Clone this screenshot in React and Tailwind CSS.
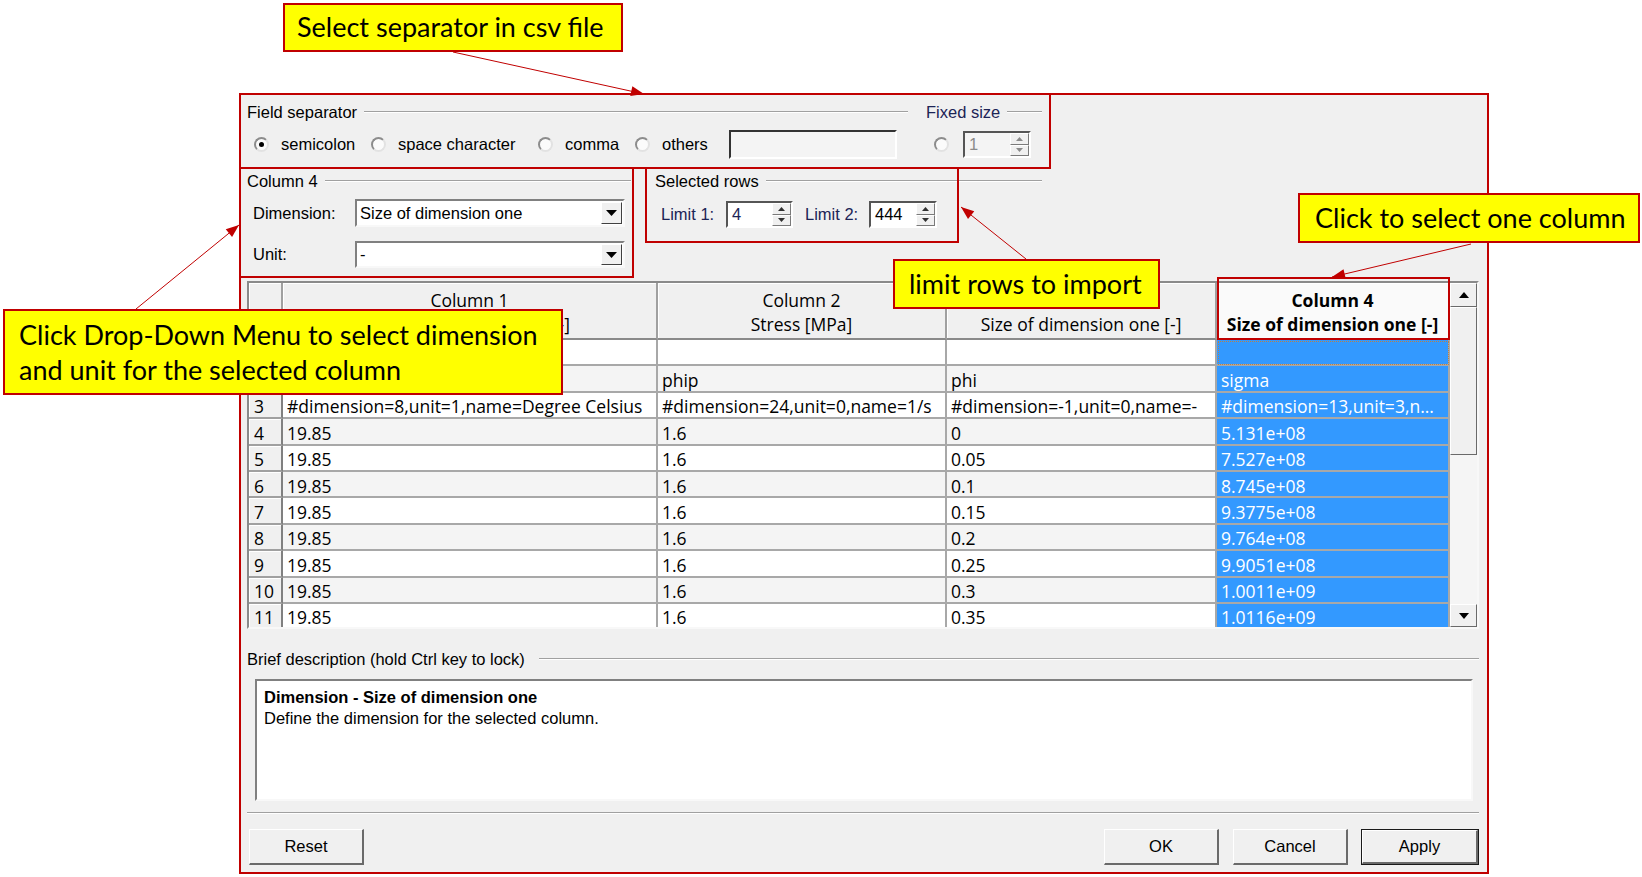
import React from 'react';

const cols = [
  { w: 'w-[375px]', h1: 'Column 1', h2: 'Size of dimension one [-]' },
  { w: 'w-[289px]', h1: 'Column 2', h2: 'Stress [MPa]' },
  { w: 'w-[270px]', h1: 'Column 3', h2: 'Size of dimension one [-]' },
  { w: 'w-[233px]', h1: 'Column 4', h2: 'Size of dimension one [-]', sel: true },
];

const rows = [
  ['1', '', '', '', ''],
  ['2', 'T', 'phip', 'phi', 'sigma'],
  ['3', '#dimension=8,unit=1,name=Degree Celsius', '#dimension=24,unit=0,name=1/s', '#dimension=-1,unit=0,name=-', '#dimension=13,unit=3,n...'],
  ['4', '19.85', '1.6', '0', '5.131e+08'],
  ['5', '19.85', '1.6', '0.05', '7.527e+08'],
  ['6', '19.85', '1.6', '0.1', '8.745e+08'],
  ['7', '19.85', '1.6', '0.15', '9.3775e+08'],
  ['8', '19.85', '1.6', '0.2', '9.764e+08'],
  ['9', '19.85', '1.6', '0.25', '9.9051e+08'],
  ['10', '19.85', '1.6', '0.3', '1.0011e+09'],
  ['11', '19.85', '1.6', '0.35', '1.0116e+09'],
];

// annotation arrows: [x1, y1, x2, y2], head at the second point
const arrows = [
  [453, 52, 644, 94],
  [1026, 259, 961, 207],
  [1471, 244, 1332, 277],
  [136, 309, 239, 225],
];

function arrowHead([x1, y1, x2, y2]) {
  const dx = x2 - x1;
  const dy = y2 - y1;
  const len = Math.hypot(dx, dy);
  const ux = dx / len;
  const uy = dy / len;
  const bx = x2 - ux * 13;
  const by = y2 - uy * 13;
  return `${x2},${y2} ${bx - uy * 5},${by + ux * 5} ${bx + uy * 5},${by - ux * 5}`;
}

function Etched({ className = '' }) {
  return <div className={`h-[2px] border-t border-t-[#a0a0a0] border-b border-b-white ${className}`} />;
}

function GroupTitle({ label, className = '', lineGap = 'ml-[7px]' }) {
  return (
    <div className={`flex items-center h-[20px] ${className}`}>
      <span className="whitespace-nowrap">{label}</span>
      <Etched className={`flex-1 ${lineGap}`} />
    </div>
  );
}

function Radio({ checked }) {
  return (
    <span className="flex items-center justify-center w-[15px] h-[15px] shrink-0 rounded-full bg-[#fbfbfb] border-2 border-t-[#8c8c8c] border-l-[#8c8c8c] border-r-[#e2e2e2] border-b-[#e2e2e2]">
      {checked && <span className="w-[5px] h-[5px] rounded-full bg-black" />}
    </span>
  );
}

function RadioItem({ label, checked, className = '' }) {
  return (
    <div className={`flex items-center shrink-0 ${className}`}>
      <Radio checked={checked} />
      {label && <span className="ml-[12px] whitespace-nowrap">{label}</span>}
    </div>
  );
}

function SpinArrows({ dim }) {
  const fill = dim ? '#8a8a8a' : '#303030';
  return (
    <div className="flex flex-col w-[19px] h-full shrink-0">
      <div className="flex-1 flex items-center justify-center bg-[#f0f0f0] border border-t-white border-l-white border-r-[#7a7a7a] border-b-[#7a7a7a]">
        <svg width="7" height="4"><path d="M0 4 L3.5 0 L7 4 Z" fill={fill} /></svg>
      </div>
      <div className="flex-1 flex items-center justify-center bg-[#f0f0f0] border border-t-white border-l-white border-r-[#7a7a7a] border-b-[#7a7a7a]">
        <svg width="7" height="4"><path d="M0 0 L7 0 L3.5 4 Z" fill={fill} /></svg>
      </div>
    </div>
  );
}

function Spin({ value, className = '', textClass = '', dim }) {
  return (
    <div className={`flex h-[27px] shrink-0 border-2 border-t-[#555] border-l-[#555] border-r-white border-b-white ${dim ? 'bg-[#f4f4f4]' : 'bg-white'} ${className}`}>
      <span className={`flex-1 pl-[4px] self-center ${textClass}`}>{value}</span>
      <SpinArrows dim={dim} />
    </div>
  );
}

function Combo({ value }) {
  return (
    <div className="flex w-[270px] h-full bg-white border-2 border-t-[#808080] border-l-[#808080] border-r-[#f8f8f8] border-b-[#f8f8f8]">
      <span className="flex-1 pl-[3px] self-center whitespace-nowrap">{value}</span>
      <span className="w-[21px] m-px flex items-center justify-center bg-[#f0f0f0] border border-t-white border-l-white border-r-[#404040] border-b-[#404040]">
        <svg width="11" height="6"><path d="M0 0 H11 L5.5 6 Z" fill="#000" /></svg>
      </span>
    </div>
  );
}

function Btn({ label, className = '', isDefault }) {
  return (
    <div className={`h-[36px] bg-[#f0f0f0] ${isDefault ? 'border border-[#1a1a1a]' : ''} ${className}`}>
      <div className="flex items-center justify-center w-full h-full border-t border-l border-t-white border-l-white border-r-2 border-b-2 border-r-[#6a6a6a] border-b-[#6a6a6a]">
        {label}
      </div>
    </div>
  );
}

function ScrollBtn({ up, className = '' }) {
  return (
    <div className={`flex items-center justify-center bg-[#f0f0f0] border border-t-white border-l-white border-r-[#6a6a6a] border-b-[#6a6a6a] ${className}`}>
      <svg width="10" height="6">
        <path d={up ? 'M0 6 L5 0 L10 6 Z' : 'M0 0 L10 0 L5 6 Z'} fill="#000" />
      </svg>
    </div>
  );
}

function DataTable() {
  return (
    <div className="mt-[4px] w-[1232px] h-[348px] flex border-2 border-t-[#8a8a8a] border-l-[#8a8a8a] border-r-[#f8f8f8] border-b-[#f8f8f8] bg-white font-['Open_Sans',sans-serif] text-[17.5px] text-black">
      <div className="w-[1201px] flex flex-col">
        <div className="flex h-[57px] shrink-0">
          <div className="w-[34px] bg-[#f0f0f0] border-r-2 border-b-2 border-r-[#a0a0a0] border-b-[#8a8a8a] shadow-[inset_1px_1px_0_#fff]" />
          {cols.map((c) => (
            <div
              key={c.h1}
              className={`${c.w} flex flex-col items-center justify-center pt-[3px] leading-[24px] border-r-2 border-b-2 border-r-[#a0a0a0] border-b-[#8a8a8a] shadow-[inset_1px_1px_0_#fff] ${c.sel ? 'bg-[#fafafa] font-bold' : 'bg-[#f0f0f0]'}`}
            >
              <span className="whitespace-nowrap">{c.h1}</span>
              <span className="whitespace-nowrap">{c.h2}</span>
            </div>
          ))}
        </div>
        <div className="h-[287px] overflow-hidden">
          {rows.map((r, i) => (
            <div key={r[0]} className={`flex h-[26.4px] ${i % 2 === 1 ? 'bg-[#f4f4f4]' : 'bg-white'}`}>
              <div className="w-[34px] flex items-center pl-[5px] pt-[3px] bg-[#f0f0f0] border-r-2 border-b-2 border-r-[#808080] border-b-[#a0a0a0] shadow-[inset_1px_1px_0_#fff]">
                {r[0]}
              </div>
              {cols.map((c, j) => (
                <div
                  key={c.h1}
                  className={`${c.w} flex items-center pl-[4px] pt-[3px] whitespace-nowrap overflow-hidden border-r-2 border-b-2 border-r-[#a8a8a8] border-b-[#a8a8a8] ${c.sel ? 'bg-[#3399ff] text-white' : ''} ${c.sel && i === 0 ? 'outline-1 outline-dotted outline-[#c08040] -outline-offset-2' : ''}`}
                >
                  {r[j + 1]}
                </div>
              ))}
            </div>
          ))}
        </div>
      </div>
      <div className="w-[27px] flex flex-col bg-[#f5f5f5]">
        <ScrollBtn up className="h-[24px]" />
        <div className="h-[148px] bg-[#f0f0f0] border border-t-white border-l-white border-r-[#6a6a6a] border-b-[#6a6a6a]" />
        <div className="flex-1" />
        <ScrollBtn className="h-[23px]" />
      </div>
    </div>
  );
}

function Dialog() {
  return (
    <div className="w-[1250px] h-[781px] border-2 border-[#c00000] bg-[#f0f0f0] flex flex-col pl-[6px] pr-[8px] text-[16.5px] text-black">
      {/* field separator */}
      <div className="h-[74px] pt-[7px] shrink-0">
        <div className="flex">
          <GroupTitle label="Field separator" className="w-[661px]" />
          <GroupTitle label="Fixed size" className="w-[116px] ml-[18px] text-[#1c2456]" />
        </div>
        <div className="mt-[8px] h-[29px] flex items-center pl-[7px]">
          <RadioItem label="semicolon" checked className="w-[117px]" />
          <RadioItem label="space character" className="w-[167px]" />
          <RadioItem label="comma" className="w-[97px]" />
          <RadioItem label="others" className="w-[94px]" />
          <div className="w-[168px] h-[29px] bg-[#f4f4f4] border-2 border-t-[#333] border-l-[#333] border-r-white border-b-white" />
          <RadioItem className="ml-[37px]" />
          <Spin value="1" dim className="w-[68px] ml-[14px]" textClass="text-[#8a8a8a]" />
        </div>
      </div>

      {/* column + selected rows */}
      <div className="h-[108px] pt-[2px] flex shrink-0">
        <div className="w-[384px]">
          <GroupTitle label="Column 4" />
          <div className="mt-[8px] h-[28px] flex items-center">
            <span className="w-[108px] pl-[6px]">Dimension:</span>
            <Combo value="Size of dimension one" />
          </div>
          <div className="mt-[14px] h-[27px] flex items-center">
            <span className="w-[108px] pl-[6px]">Unit:</span>
            <Combo value="-" />
          </div>
        </div>
        <div className="w-[387px] ml-[24px]">
          <GroupTitle label="Selected rows" />
          <div className="mt-[10px] h-[27px] flex items-center text-[#1c2456]">
            <span className="w-[71px] pl-[6px] whitespace-nowrap">Limit 1:</span>
            <Spin value="4" className="w-[67px]" textClass="text-[#1c2456]" />
            <span className="w-[64px] ml-[12px] whitespace-nowrap">Limit 2:</span>
            <Spin value="444" className="w-[68px]" textClass="text-black" />
          </div>
        </div>
      </div>

      <DataTable />

      {/* description */}
      <GroupTitle label="Brief description (hold Ctrl key to lock)" className="mt-[20px]" lineGap="ml-[14px]" />
      <div className="mt-[10px] ml-[8px] w-[1218px] h-[122px] shrink-0 bg-white border-2 border-t-[#808080] border-l-[#808080] border-r-[#f8f8f8] border-b-[#f8f8f8] pl-[7px] pt-[6px] leading-[21px]">
        <div className="font-bold">Dimension - Size of dimension one</div>
        <div>Define the dimension for the selected column.</div>
      </div>
      <Etched className="mt-[11px] shrink-0" />

      <div className="mt-[15px] flex shrink-0">
        <Btn label="Reset" className="w-[115px] ml-[2px]" />
        <Btn label="OK" className="w-[115px] ml-auto" />
        <Btn label="Cancel" className="w-[115px] ml-[14px]" />
        <Btn label="Apply" isDefault className="w-[118px] ml-[13px]" />
      </div>
    </div>
  );
}

export default function App() {
  return (
    <div className="relative w-[1642px] h-[877px] bg-white overflow-hidden pl-[239px] pt-[93px] font-['Liberation_Sans',Arial,sans-serif]">
      <Dialog />

      {/* red annotation frames */}
      <div className="absolute left-[239px] top-[93px] w-[812px] h-[76px] border-2 border-[#c00000]" />
      <div className="absolute left-[239px] top-[167px] w-[395px] h-[111px] border-2 border-[#c00000]" />
      <div className="absolute left-[645px] top-[167px] w-[314px] h-[76px] border-2 border-[#c00000]" />
      <div className="absolute left-[1217px] top-[277px] w-[233px] h-[63px] border-2 border-[#c00000]" />

      <svg className="absolute left-0 top-0 pointer-events-none" width="1642" height="877">
        {arrows.map((a, i) => (
          <g key={i}>
            <line x1={a[0]} y1={a[1]} x2={a[2]} y2={a[3]} stroke="#c00000" strokeWidth="1" />
            <polygon points={arrowHead(a)} fill="#c00000" />
          </g>
        ))}
      </svg>

      {/* callouts */}
      <div className="font-['Lato',sans-serif] text-[27px] text-black">
        <div className="absolute left-[283px] top-[3px] w-[340px] h-[49px] bg-[#ffff00] border-2 border-[#c00000] flex items-center pl-[12px] whitespace-nowrap">
          Select separator in csv file
        </div>
        <div className="absolute left-[3px] top-[309px] w-[560px] h-[86px] bg-[#ffff00] border-2 border-[#c00000] flex flex-col justify-center pl-[14px] leading-[35px]">
          <span>Click Drop-Down Menu to select dimension</span>
          <span>and unit for the selected column</span>
        </div>
        <div className="absolute left-[893px] top-[259px] w-[267px] h-[50px] bg-[#ffff00] border-2 border-[#c00000] flex items-center pl-[14px] whitespace-nowrap">
          limit rows to import
        </div>
        <div className="absolute left-[1298px] top-[193px] w-[342px] h-[50px] bg-[#ffff00] border-2 border-[#c00000] flex items-center pl-[15px] whitespace-nowrap">
          Click to select one column
        </div>
      </div>
    </div>
  );
}
